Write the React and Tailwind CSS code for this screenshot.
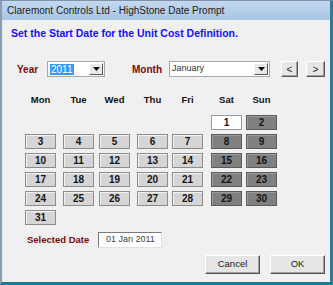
import React from "react";

const F = { fontFamily: '"Liberation Sans", Arial, sans-serif' };

function Day({ n, v }) {
  const base =
    "w-[31px] h-[15px] flex items-center justify-center text-[10px] font-bold leading-none text-[#141414]";
  if (v === "white")
    return (
      <div className={base + " bg-white border border-[#9a9a9a]"}>{n}</div>
    );
  if (v === "dark")
    return (
      <div className={base + " bg-[#808080] border border-[#5c5c5c] shadow-[inset_1px_1px_0_#9a9a9a]"}>
        {n}
      </div>
    );
  return (
    <div className={base + " bg-[#d5d5d5] border border-[#8c8c8c] shadow-[inset_1px_1px_0_#f2f2f2]"}>
      {n}
    </div>
  );
}

function Raised({ className, children }) {
  return (
    <div
      className={
        "flex items-center justify-center bg-[#e6e6e6] border border-t-white border-l-white border-r-[#555] border-b-[#555] shadow-[inset_-1px_-1px_0_#a0a0a0] text-[#222] " +
        className
      }
    >
      {children}
    </div>
  );
}

function Arrow() {
  return (
    <div className="w-[14px] h-[12px] flex items-center justify-center bg-[#e8e8e8] border border-t-white border-l-white border-r-[#555] border-b-[#555]">
      <svg width="7" height="4" viewBox="0 0 7 4">
        <path d="M0 0h7L3.5 4z" fill="#000" />
      </svg>
    </div>
  );
}

const rows = [
  [null, null, null, null, null, [1, "white"], [2, "dark"]],
  [[3], [4], [5], [6], [7], [8, "dark"], [9, "dark"]],
  [[10], [11], [12], [13], [14], [15, "dark"], [16, "dark"]],
  [[17], [18], [19], [20], [21], [22, "dark"], [23, "dark"]],
  [[24], [25], [26], [27], [28], [29, "dark"], [30, "dark"]],
  [[31], null, null, null, null, null, null],
];

const heads = ["Mon", "Tue", "Wed", "Thu", "Fri", "Sat", "Sun"];

export default function App() {
  return (
    <div
      style={F}
      className="w-[333px] h-[285px] flex flex-col bg-[#f0f0f0] border-t border-t-[#7f93a8] border-l-2 border-l-[#8d9db0] border-r-[3px] border-r-[#2a7c98] border-b-[3px] border-b-[#157d96] overflow-hidden"
    >
      {/* title bar */}
      <div className="h-[19px] shrink-0 flex items-center pl-[5px] bg-gradient-to-b from-[#c4d8ee] to-[#a9c5e3] text-[10px] text-[#1b1b1b]">
        Claremont Controls Ltd - HighStone Date Prompt
      </div>

      <div className="flex-1 flex flex-col border-l border-l-[#dfe6ee]">
        <div className="mt-[7px] ml-[8px] text-[10.5px] leading-[12px] font-bold text-[#1010ff]">
          Set the Start Date for the Unit Cost Definition.
        </div>

        {/* year / month row */}
        <div className="mt-[22px] pl-[14px] flex items-center h-[16px]">
          <div className="w-[30px] text-[10px] font-bold text-[#7a0a0a]">Year</div>
          <div className="w-[58px] h-[16px] bg-white border border-[#a8a8a8] flex items-center justify-between pl-[2px] pr-[1px]">
            <span className="bg-[#3399ff] text-white text-[10px] leading-[11px] px-[1px]">2011</span>
            <Arrow />
          </div>
          <div className="ml-[27px] w-[37px] text-[10px] font-bold text-[#7a0a0a]">Month</div>
          <div className="w-[101px] h-[16px] bg-white border border-[#a8a8a8] flex items-center justify-between pl-[2px] pr-[1px]">
            <span className="text-[9px] text-[#333]">January</span>
            <Arrow />
          </div>
          <Raised className="ml-[11px] w-[17px] h-[16px] text-[10px]">&lt;</Raised>
          <Raised className="ml-[8px] w-[19px] h-[16px] text-[10px]">&gt;</Raised>
        </div>

        {/* headers */}
        <div className="mt-[17px] pl-[22px] grid grid-cols-[38px_36px_38px_35px_39px_35px_31px] h-[12px]">
          {heads.map((h) => (
            <div key={h} className="w-[31px] text-center text-[9.5px] leading-[12px] font-bold text-[#111]">
              {h}
            </div>
          ))}
        </div>

        {/* days */}
        <div className="mt-[9px] pl-[22px] grid grid-cols-[38px_36px_38px_35px_39px_35px_31px] gap-y-[4px]">
          {rows.flat().map((c, i) =>
            c ? <Day key={i} n={c[0]} v={c[1]} /> : <div key={i} className="h-[15px]" />
          )}
        </div>

        {/* selected date */}
        <div className="mt-[7px] pl-[24px] flex items-center h-[16px]">
          <div className="w-[71px] text-[9.5px] font-bold text-[#7a0a0a]">Selected Date</div>
          <div className="w-[64px] h-[16px] bg-white border border-t-[#7a7a7a] border-l-[#7a7a7a] border-r-[#e0e0e0] border-b-[#e0e0e0] flex items-center pl-[7px] text-[9px] text-[#444]">
            01 Jan 2011
          </div>
        </div>

        {/* buttons */}
        <div className="mt-[7px] flex justify-end gap-[10px] pr-[5px]">
          <Raised className="w-[55px] h-[19px] text-[9.5px]">Cancel</Raised>
          <Raised className="w-[55px] h-[19px] text-[9.5px]">OK</Raised>
        </div>
      </div>
    </div>
  );
}
